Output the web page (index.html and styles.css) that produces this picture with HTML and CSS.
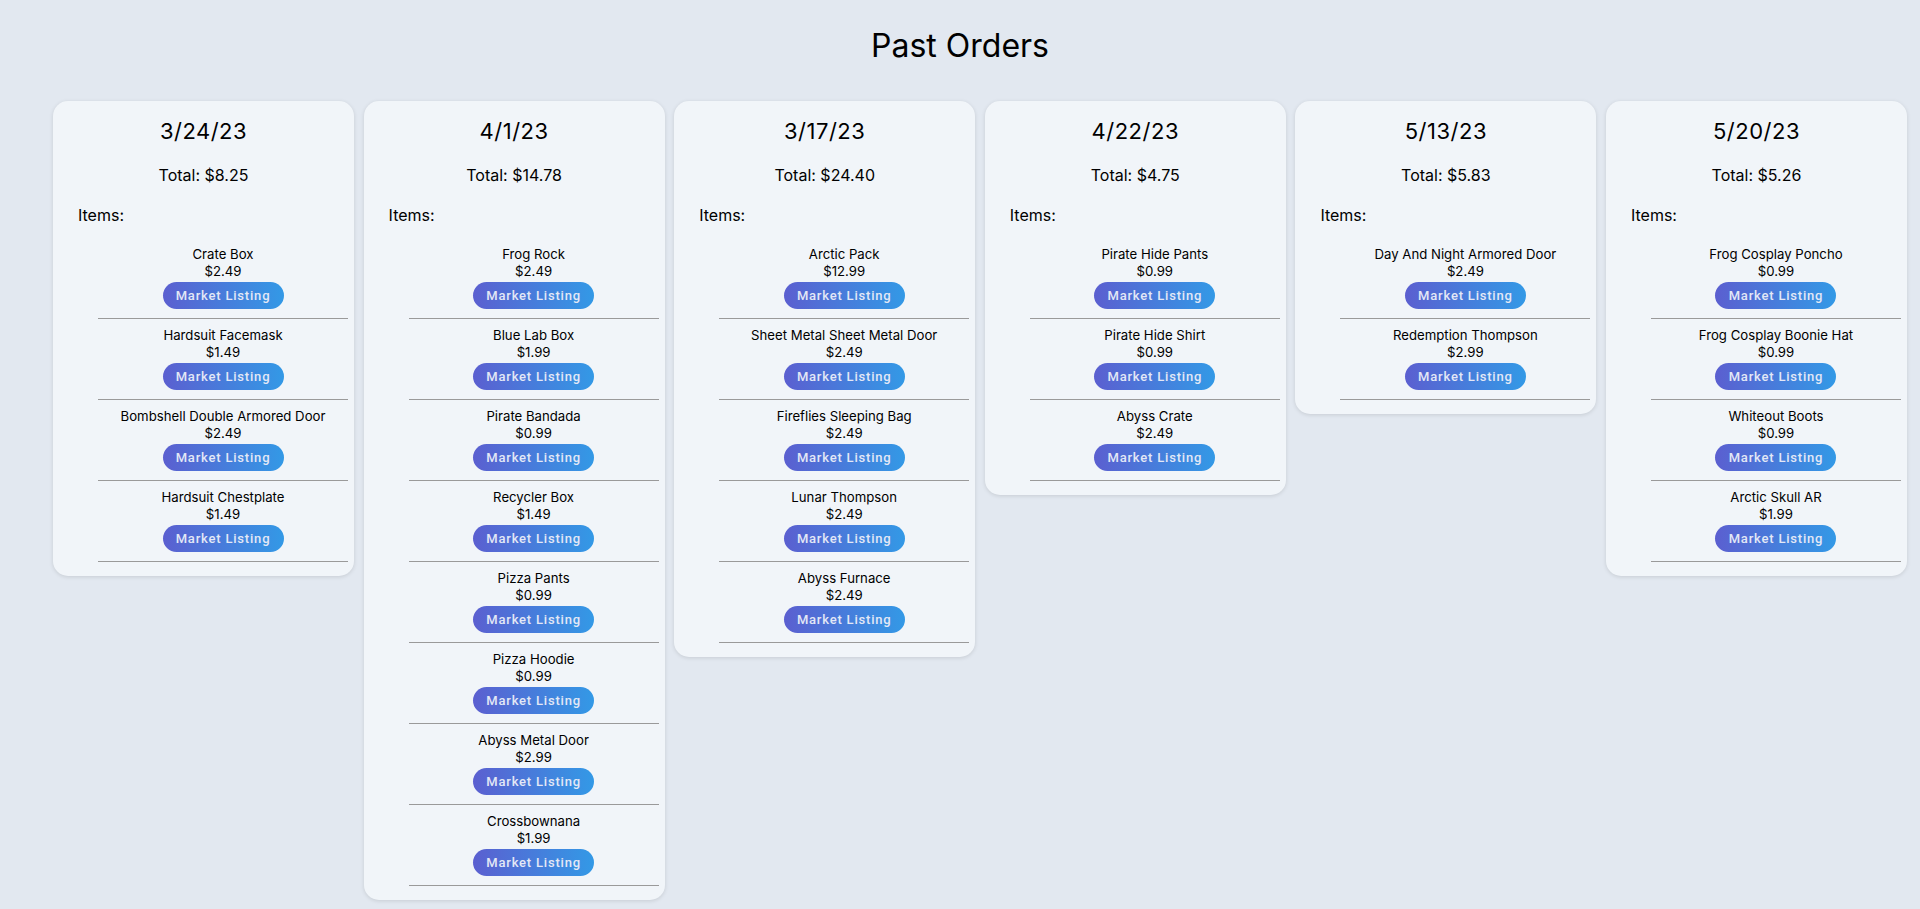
FILE: index.html
```html
<!DOCTYPE html>
<html>
<head>
<meta charset="utf-8">
<title>Past Orders</title>
<link rel="stylesheet" href="styles.css">
</head>
<body>
<h1 class="title">Past Orders</h1>
<div class="orders">
  <div class="card">
    <h2 class="date">3/24/23</h2>
    <p class="total">Total: $8.25</p>
    <p class="items-label">Items:</p>
    <ul class="items">
      <li class="item"><span class="name">Crate Box</span><span class="price">$2.49</span><a class="btn">Market Listing</a></li>
      <li class="item"><span class="name">Hardsuit Facemask</span><span class="price">$1.49</span><a class="btn">Market Listing</a></li>
      <li class="item"><span class="name">Bombshell Double Armored Door</span><span class="price">$2.49</span><a class="btn">Market Listing</a></li>
      <li class="item"><span class="name">Hardsuit Chestplate</span><span class="price">$1.49</span><a class="btn">Market Listing</a></li>
    </ul>
  </div>
  <div class="card">
    <h2 class="date">4/1/23</h2>
    <p class="total">Total: $14.78</p>
    <p class="items-label">Items:</p>
    <ul class="items">
      <li class="item"><span class="name">Frog Rock</span><span class="price">$2.49</span><a class="btn">Market Listing</a></li>
      <li class="item"><span class="name">Blue Lab Box</span><span class="price">$1.99</span><a class="btn">Market Listing</a></li>
      <li class="item"><span class="name">Pirate Bandada</span><span class="price">$0.99</span><a class="btn">Market Listing</a></li>
      <li class="item"><span class="name">Recycler Box</span><span class="price">$1.49</span><a class="btn">Market Listing</a></li>
      <li class="item"><span class="name">Pizza Pants</span><span class="price">$0.99</span><a class="btn">Market Listing</a></li>
      <li class="item"><span class="name">Pizza Hoodie</span><span class="price">$0.99</span><a class="btn">Market Listing</a></li>
      <li class="item"><span class="name">Abyss Metal Door</span><span class="price">$2.99</span><a class="btn">Market Listing</a></li>
      <li class="item"><span class="name">Crossbownana</span><span class="price">$1.99</span><a class="btn">Market Listing</a></li>
    </ul>
  </div>
  <div class="card">
    <h2 class="date">3/17/23</h2>
    <p class="total">Total: $24.40</p>
    <p class="items-label">Items:</p>
    <ul class="items">
      <li class="item"><span class="name">Arctic Pack</span><span class="price">$12.99</span><a class="btn">Market Listing</a></li>
      <li class="item"><span class="name">Sheet Metal Sheet Metal Door</span><span class="price">$2.49</span><a class="btn">Market Listing</a></li>
      <li class="item"><span class="name">Fireflies Sleeping Bag</span><span class="price">$2.49</span><a class="btn">Market Listing</a></li>
      <li class="item"><span class="name">Lunar Thompson</span><span class="price">$2.49</span><a class="btn">Market Listing</a></li>
      <li class="item"><span class="name">Abyss Furnace</span><span class="price">$2.49</span><a class="btn">Market Listing</a></li>
    </ul>
  </div>
  <div class="card">
    <h2 class="date">4/22/23</h2>
    <p class="total">Total: $4.75</p>
    <p class="items-label">Items:</p>
    <ul class="items">
      <li class="item"><span class="name">Pirate Hide Pants</span><span class="price">$0.99</span><a class="btn">Market Listing</a></li>
      <li class="item"><span class="name">Pirate Hide Shirt</span><span class="price">$0.99</span><a class="btn">Market Listing</a></li>
      <li class="item"><span class="name">Abyss Crate</span><span class="price">$2.49</span><a class="btn">Market Listing</a></li>
    </ul>
  </div>
  <div class="card">
    <h2 class="date">5/13/23</h2>
    <p class="total">Total: $5.83</p>
    <p class="items-label">Items:</p>
    <ul class="items">
      <li class="item"><span class="name">Day And Night Armored Door</span><span class="price">$2.49</span><a class="btn">Market Listing</a></li>
      <li class="item"><span class="name">Redemption Thompson</span><span class="price">$2.99</span><a class="btn">Market Listing</a></li>
    </ul>
  </div>
  <div class="card">
    <h2 class="date">5/20/23</h2>
    <p class="total">Total: $5.26</p>
    <p class="items-label">Items:</p>
    <ul class="items">
      <li class="item"><span class="name">Frog Cosplay Poncho</span><span class="price">$0.99</span><a class="btn">Market Listing</a></li>
      <li class="item"><span class="name">Frog Cosplay Boonie Hat</span><span class="price">$0.99</span><a class="btn">Market Listing</a></li>
      <li class="item"><span class="name">Whiteout Boots</span><span class="price">$0.99</span><a class="btn">Market Listing</a></li>
      <li class="item"><span class="name">Arctic Skull AR</span><span class="price">$1.99</span><a class="btn">Market Listing</a></li>
    </ul>
  </div>
</div>
</body>
</html>
```
FILE: styles.css
```css
html, body {
  margin: 0;
  padding: 0;
}
body {
  background: #e2e8f0;
  font-family: Inter, "Noto Sans", sans-serif;
  color: #000;
  min-height: 909px;
}
.title {
  margin: 0;
  padding-top: 26px;
  font-size: 32px;
  font-weight: 400;
  line-height: 39px;
  text-align: center;
}
.orders {
  display: flex;
  align-items: flex-start;
  gap: 9.6px;
  padding: 36px 13px 20px 53px;
}
.card {
  flex: 0 0 301px;
  width: 301px;
  box-sizing: border-box;
  background: #f1f5f9;
  border-radius: 15px;
  box-shadow: 0 1px 4px rgba(0, 0, 0, 0.12);
  padding: 17px 0 14px 0;
}
.date {
  margin: 0;
  font-size: 22px;
  font-weight: 400;
  line-height: 27px;
  letter-spacing: 0.5px;
  text-align: center;
}
.total {
  margin: 20px 0 0 0;
  font-size: 16px;
  line-height: 21px;
  text-align: center;
}
.items-label {
  margin: 19px 0 0 25px;
  font-size: 16px;
  line-height: 21px;
}
.items {
  list-style: none;
  margin: 12px 6px 0 45px;
  padding: 0;
}
.item {
  display: flex;
  flex-direction: column;
  align-items: center;
  padding: 8px 0 9px 0;
  border-bottom: 1px solid #9a9a9a;
  font-size: 13.2px;
  line-height: 17px;
}
.name, .price {
  display: block;
}
.btn {
  display: block;
  margin-top: 2px;
  width: 121px;
  height: 27px;
  box-sizing: border-box;
  border-radius: 14px;
  background: linear-gradient(to right, #5b5fd0, #3399e6);
  color: #e3e8f6;
  font-family: Roboto, "Noto Sans", sans-serif;
  font-size: 13px;
  font-weight: 500;
  letter-spacing: 0.8px;
  line-height: 27px;
  text-align: center;
  cursor: pointer;
}
```
